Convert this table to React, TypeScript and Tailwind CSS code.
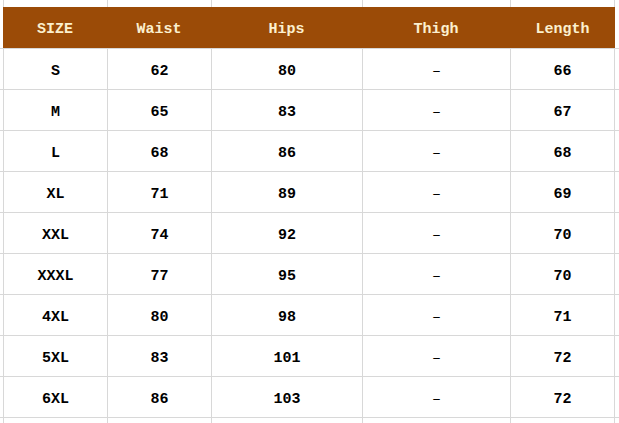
const columns = ['SIZE', 'Waist', 'Hips', 'Thigh', 'Length'];

const rows: string[][] = [
  ['S', '62', '80', '–', '66'],
  ['M', '65', '83', '–', '67'],
  ['L', '68', '86', '–', '68'],
  ['XL', '71', '89', '–', '69'],
  ['XXL', '74', '92', '–', '70'],
  ['XXXL', '77', '95', '–', '70'],
  ['4XL', '80', '98', '–', '71'],
  ['5XL', '83', '101', '–', '72'],
  ['6XL', '86', '103', '–', '72'],
];

const grid = 'grid grid-cols-[3px_104px_104px_151px_148px_104px_1fr]';

export default function App() {
  return (
    <div
      className="w-[619px] h-[423px] overflow-hidden bg-white text-black"
      style={{ fontFamily: '"Liberation Mono", "DejaVu Sans Mono", monospace' }}
    >
      {/* strip above the header */}
      <div className={`${grid} h-[7px]`}>
        <div />
        {[0, 1, 2, 3, 4, 5].map((i) => (
          <div key={i} className="border-l border-[#d8d8d8]" />
        ))}
      </div>

      {/* header band */}
      <div className="flex h-[41px]">
        <div className="w-[3px]" />
        <div className="flex w-[612px] bg-[#9b4b07] text-[#fbf0cf] text-[15px] font-bold">
          {columns.map((c, i) => (
            <div
              key={c}
              className={`flex items-center justify-center pt-[6px] ${
                ['w-[104px]', 'w-[104px]', 'w-[151px]', 'w-[148px]', 'w-[105px]'][i]
              }`}
            >
              {c}
            </div>
          ))}
        </div>
      </div>

      {/* body */}
      {rows.map((r, ri) => (
        <div key={ri} className={`${grid} h-[41px] border-t border-[#d8d8d8]`}>
          <div />
          {r.map((v, i) => (
            <div
              key={i}
              className={`flex items-center justify-center border-l border-[#d8d8d8] pt-[6px] text-[15px] ${
                i === 3 ? 'font-normal' : 'font-bold'
              }`}
            >
              {v}
            </div>
          ))}
          <div className="border-l border-[#d8d8d8]" />
        </div>
      ))}

      {/* strip below */}
      <div className={`${grid} h-[10px] border-t border-[#d8d8d8]`}>
        <div />
        {[0, 1, 2, 3, 4, 5].map((i) => (
          <div key={i} className="border-l border-[#d8d8d8]" />
        ))}
      </div>
    </div>
  );
}
